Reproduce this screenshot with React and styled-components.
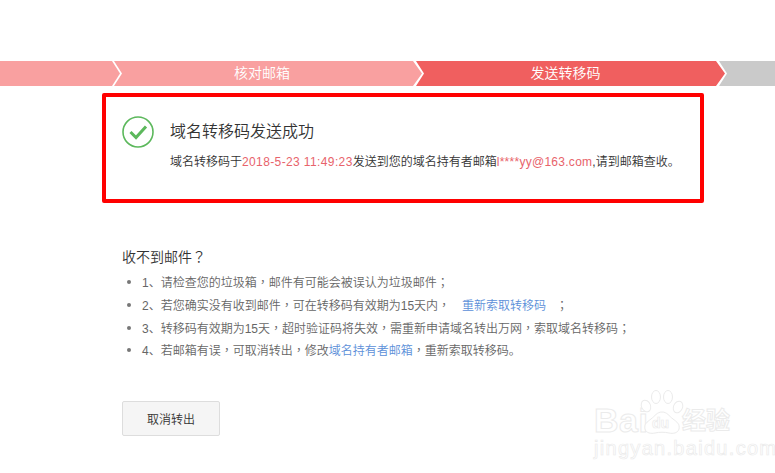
import React from "react";
import styled, { createGlobalStyle } from "styled-components";

const Global = createGlobalStyle`
  html, body { margin: 0; padding: 0; background: #fff; }
  body { font-family: "Liberation Sans", "Noto Sans CJK SC", sans-serif; font-weight: 350; }
`;

const Page = styled.div`
  position: relative;
  width: 775px;
  height: 473px;
  overflow: hidden;
  padding-top: 61px;
  box-sizing: border-box;
`;

const Stepper = styled.div`
  display: flex;
  height: 25px;
`;

const Step = styled.div`
  flex: 0 0 ${(p) => p.$width}px;
  margin-left: ${(p) => (p.$first ? 0 : -6)}px;
  background: ${(p) => p.$bg};
  color: #fff;
  font-size: 14px;
  line-height: 25px;
  text-align: center;
  padding-right: ${(p) => p.$inset || 0}px;
  box-sizing: border-box;
  clip-path: ${(p) =>
    p.$first
      ? "polygon(0 0, calc(100% - 8px) 0, 100% 50%, calc(100% - 8px) 100%, 0 100%)"
      : p.$last
      ? "polygon(0 0, 100% 0, 100% 100%, 0 100%, 8px 50%)"
      : "polygon(0 0, calc(100% - 9px) 0, 100% 50%, calc(100% - 9px) 100%, 0 100%, 8px 50%)"};
`;

const Notice = styled.section`
  display: flex;
  align-items: flex-start;
  width: 602px;
  height: 110px;
  margin: 7px 0 0 102px;
  box-sizing: border-box;
  border: 4px solid #ff0000;
  border-radius: 2px;
  padding: 19px 0 0 16px;
`;

const CheckIcon = styled.svg`
  flex: none;
  width: 32px;
  height: 32px;
  margin-right: 16px;
`;

const NoticeBody = styled.div`
  color: #333;
`;

const NoticeTitle = styled.h2`
  margin: 4px 0 0;
  font-size: 16px;
  font-weight: 350;
  line-height: 24px;
`;

const NoticeText = styled.p`
  margin: 9px 0 0;
  font-size: 12px;
  line-height: 18px;
  white-space: nowrap;
`;

const Accent = styled.span`
  color: #e8636b;
  letter-spacing: ${(p) => p.$spacing}px;
`;

const Mark = styled.span`
  font-family: "Noto Sans CJK TC", sans-serif;
`;

const Help = styled.section`
  margin: 43px 0 0 122px;
`;

const HelpTitle = styled.h3`
  margin: 0;
  font-size: 14px;
  font-weight: 350;
  line-height: 20px;
  color: #333;
`;

const HelpList = styled.ul`
  list-style: none;
  margin: 3px 0 0;
  padding: 0;
`;

const HelpItem = styled.li`
  position: relative;
  padding-left: 20px;
  font-size: 12px;
  color: #666;
  height: ${(p) => p.$h}px;
  line-height: ${(p) => p.$h}px;
  white-space: nowrap;
  &::before {
    content: "";
    position: absolute;
    left: 5px;
    top: calc(50% - 2px);
    width: 4px;
    height: 4px;
    border-radius: 50%;
    background: #777;
  }
`;

const HelpLink = styled.a`
  color: #5b8fd9;
  margin: ${(p) => (p.$spaced ? "0 10px 0 12px" : "0")};
`;

const CancelButton = styled.button`
  display: block;
  width: 98px;
  height: 35px;
  margin: 40px 0 0 122px;
  padding: 0;
  box-sizing: border-box;
  background: #f5f5f5;
  border: 1px solid #ddd;
  border-radius: 2px;
  color: #333;
  font: 350 12px "Liberation Sans", "Noto Sans CJK SC", sans-serif;
`;

const Watermark = styled.div`
  position: absolute;
  left: 594px;
  top: 390px;
  width: 150px;
  height: 72px;
  color: #fff;
  font-family: "Liberation Sans", "Noto Sans CJK SC", sans-serif;
  -webkit-text-stroke: 1px #ebebeb;
`;

const WmBai = styled.span`
  position: absolute;
  left: 0;
  top: 13px;
  font-size: 34px;
  line-height: 34px;
  font-weight: 700;
  letter-spacing: 0.5px;
`;

const WmJing = styled.span`
  position: absolute;
  left: 88px;
  top: 18px;
  font-size: 24px;
  line-height: 26px;
  font-weight: 700;
  white-space: nowrap;
`;

const WmUrl = styled.span`
  position: absolute;
  left: 0;
  top: 47px;
  font-size: 20px;
  line-height: 23px;
  letter-spacing: 1.3px;
  white-space: nowrap;
  -webkit-text-stroke: 0.7px #ebebeb;
`;

const WmPaw = styled.svg`
  position: absolute;
  left: 44px;
  top: 0;
  width: 48px;
  height: 46px;
`;

const WmDu = styled.span`
  position: absolute;
  left: 58px;
  top: 25px;
  font-size: 14px;
  line-height: 16px;
  font-weight: 700;
  -webkit-text-stroke: 0.7px #ebebeb;
`;

export default function App() {
  return (
    <Page>
      <Global />
      <Stepper>
        <Step $first $width={120} $bg="#f9a0a0" />
        <Step $width={308} $bg="#f9a0a0" $inset={12}>核对邮箱</Step>
        <Step $width={309} $bg="#f05f5f" $inset={10}>发送转移码</Step>
        <Step $last $width={62} $bg="#cacaca" />
      </Stepper>

      <Notice>
        <CheckIcon viewBox="0 0 32 32">
          <circle cx="16" cy="16" r="15" fill="none" stroke="#5cb85c" strokeWidth="1.6" />
          <path d="M8.5 16 L14 21.5 L24 10.5" fill="none" stroke="#5cb85c" strokeWidth="3" />
        </CheckIcon>
        <NoticeBody>
          <NoticeTitle>域名转移码发送成功</NoticeTitle>
          <NoticeText>
            域名转移码于<Accent $spacing={0.38}>2018-5-23 11:49:23</Accent>发送到您的域名持有者邮箱
            <Accent $spacing={0.27}>l****yy@163.com</Accent>,请到邮箱查收。
          </NoticeText>
        </NoticeBody>
      </Notice>

      <Help>
        <HelpTitle>收不到邮件<Mark>？</Mark></HelpTitle>
        <HelpList>
          <HelpItem $h={23}>1、请检查您的垃圾箱<Mark>，</Mark>邮件有可能会被误认为垃圾邮件<Mark>；</Mark></HelpItem>
          <HelpItem $h={23}>
            2、若您确实没有收到邮件<Mark>，</Mark>可在转移码有效期为15天内<Mark>，</Mark>
            <HelpLink $spaced>重新索取转移码</HelpLink><Mark>；</Mark>
          </HelpItem>
          <HelpItem $h={23}>3、转移码有效期为15天<Mark>，</Mark>超时验证码将失效<Mark>，</Mark>需重新申请域名转出万网<Mark>，</Mark>索取域名转移码<Mark>；</Mark></HelpItem>
          <HelpItem $h={22}>
            4、若邮箱有误<Mark>，</Mark>可取消转出<Mark>，</Mark>修改<HelpLink>域名持有者邮箱</HelpLink><Mark>，</Mark>重新索取转移码。
          </HelpItem>
        </HelpList>
      </Help>

      <CancelButton>取消转出</CancelButton>

      <Watermark>
        <WmBai>Bai</WmBai>
        <WmPaw viewBox="0 0 48 46" fill="#fff" stroke="#ebebeb" strokeWidth="1">
          <ellipse cx="8" cy="16" rx="4.5" ry="6" transform="rotate(-25 8 16)" />
          <ellipse cx="18" cy="7" rx="4.5" ry="6.5" />
          <ellipse cx="30" cy="7" rx="4.5" ry="6.5" />
          <ellipse cx="40" cy="17" rx="4.5" ry="6" transform="rotate(25 40 17)" />
          <path d="M24 22c-5 0-7 4-11 7-4 3-7 5-6 10 1 4 6 5 10 4 4-1 10-1 14 0 4 1 9 0 10-4 1-5-2-7-6-10-4-3-6-7-11-7z" />
        </WmPaw>
        <WmDu>du</WmDu>
        <WmJing>经验</WmJing>
        <WmUrl>jingyan.baidu.com</WmUrl>
      </Watermark>
    </Page>
  );
}
